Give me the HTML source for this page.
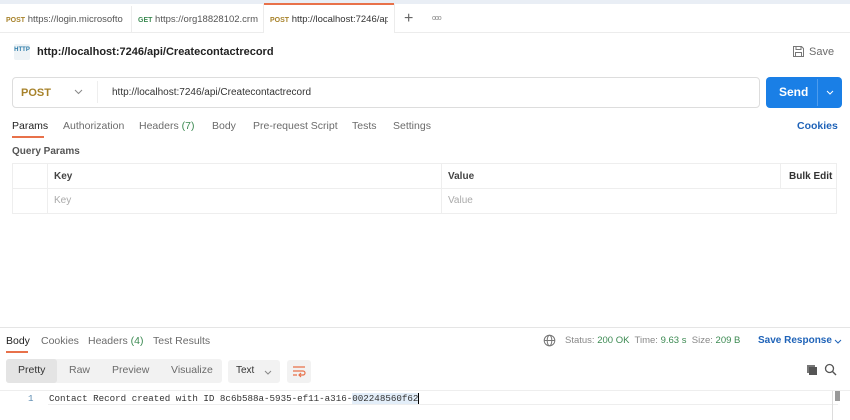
<!DOCTYPE html>
<html><head><meta charset="utf-8"><style>
*{margin:0;padding:0;box-sizing:border-box}
body{width:850px;height:420px;overflow:hidden;background:#fff;font-family:"Liberation Sans",sans-serif;font-size:11px;color:#212121;position:relative}
.a{position:absolute;white-space:nowrap}
.g{color:#6b6b6b}
.m{font-size:7px;font-weight:bold}
</style></head><body>
<div class="a" style="left:0;top:0;width:850px;height:4px;background:#e9eef5"></div>
<div class="a" style="left:0;top:4px;width:850px;height:29px;background:#fff;border-bottom:1px solid #ececec"></div>
<div class="a" style="left:131px;top:6px;width:1px;height:27px;background:#ececec"></div>
<div class="a" style="left:263px;top:4px;width:1px;height:29px;background:#ececec"></div>
<div class="a" style="left:394px;top:4px;width:1px;height:29px;background:#ececec"></div>
<div class="a" style="left:264px;top:3px;width:130px;height:31px;background:#fff;border-top:2px solid #e8714a"></div>
<div class="a" style="left:6px;top:14px;font-size:9.5px;color:#555"><span class="m" style="color:#a7822a">POST</span> https://login.microsofto</div>
<div class="a" style="left:138px;top:14px;font-size:9.5px;color:#555"><span class="m" style="color:#3c8a52">GET</span> https://org18828102.crm</div>
<div class="a" style="left:270px;top:14px;font-size:9.5px;color:#333;width:118px;overflow:hidden"><span class="m" style="color:#a7822a">POST</span> http://localhost:7246/ap</div>
<div class="a" style="left:404px;top:10px;font-size:16px;color:#666">+</div>
<div class="a" style="left:432px;top:15px;font-size:7px;color:#888;letter-spacing:-1px">ooo</div>

<div class="a" style="left:14px;top:44px;width:16px;height:16px;background:#eef3f6;border-radius:2px;font-size:6px;color:#2a7aa8;font-weight:bold;text-align:center;line-height:12px">HTTP</div>
<div class="a" style="left:37px;top:46px;font-size:11px;font-weight:bold;color:#222">http://localhost:7246/api/Createcontactrecord</div>
<svg class="a" style="left:792px;top:45px" width="13" height="13" viewBox="0 0 13 13"><path d="M1.5 1.5h8l2 2v8h-10z M4 1.5v3h5v-3 M3.5 11.5v-4h6v4" fill="none" stroke="#777" stroke-width="1"/></svg>
<div class="a g" style="left:809px;top:46px;font-size:11px">Save</div>

<div class="a" style="left:12px;top:77px;width:748px;height:31px;border:1px solid #ddd;border-radius:4px"></div>
<div class="a" style="left:97px;top:81px;width:1px;height:22px;background:#eee"></div>
<div class="a" style="left:21px;top:87px;font-weight:bold;color:#a7822a;font-size:11px">POST</div>
<svg class="a" style="left:74px;top:89px" width="9" height="6" viewBox="0 0 9 6"><path d="M1 1l3.5 3.5L8 1" fill="none" stroke="#888"/></svg>
<div class="a" style="left:112px;top:87px;font-size:10px;color:#333">http://localhost:7246/api/Createcontactrecord</div>
<div class="a" style="left:766px;top:77px;width:76px;height:31px;background:#1a7fe6;border-radius:4px"></div>
<div class="a" style="left:817px;top:79px;width:1px;height:27px;background:#4d9cee"></div>
<div class="a" style="left:779px;top:85px;color:#fff;font-weight:bold;font-size:12px">Send</div>
<svg class="a" style="left:826px;top:90px" width="8" height="5" viewBox="0 0 8 5"><path d="M1 1l3 3 3-3" fill="none" stroke="#fff"/></svg>

<div class="a" style="left:12px;top:120px;font-size:10.5px;color:#222">Params</div>
<div class="a" style="left:12px;top:136px;width:32px;height:2px;background:#e8714a"></div>
<div class="a g" style="left:63px;top:120px;font-size:10.5px">Authorization</div>
<div class="a g" style="left:139px;top:120px;font-size:10.5px">Headers <span style="color:#3c8a52">(7)</span></div>
<div class="a g" style="left:212px;top:120px;font-size:10.5px">Body</div>
<div class="a g" style="left:253px;top:120px;font-size:10.5px">Pre-request Script</div>
<div class="a g" style="left:352px;top:120px;font-size:10.5px">Tests</div>
<div class="a g" style="left:393px;top:120px;font-size:10.5px">Settings</div>
<div class="a" style="left:797px;top:120px;font-size:10.5px;color:#1f63b8;font-weight:bold">Cookies</div>

<div class="a" style="left:12px;top:146px;font-size:10px;font-weight:bold;color:#555">Query Params</div>
<div class="a" style="left:12px;top:163px;width:825px;height:51px;border:1px solid #eee"></div>
<div class="a" style="left:12px;top:188px;width:825px;height:1px;background:#eee"></div>
<div class="a" style="left:47px;top:163px;width:1px;height:51px;background:#eee"></div>
<div class="a" style="left:441px;top:163px;width:1px;height:51px;background:#eee"></div>
<div class="a" style="left:780px;top:163px;width:1px;height:25px;background:#eee"></div>
<div class="a" style="left:54px;top:171px;font-size:10px;font-weight:bold;color:#444">Key</div>
<div class="a" style="left:448px;top:171px;font-size:10px;font-weight:bold;color:#444">Value</div>
<div class="a" style="left:789px;top:171px;font-size:10px;font-weight:bold;color:#333">Bulk Edit</div>
<div class="a" style="left:54px;top:195px;font-size:10px;color:#aaa">Key</div>
<div class="a" style="left:448px;top:195px;font-size:10px;color:#aaa">Value</div>

<div class="a" style="left:0;top:327px;width:850px;height:1px;background:#e5e5e5"></div>
<div class="a" style="left:6px;top:335px;font-size:10.5px;color:#222">Body</div>
<div class="a" style="left:6px;top:351px;width:22px;height:2px;background:#e8714a"></div>
<div class="a g" style="left:41px;top:335px;font-size:10.5px">Cookies</div>
<div class="a g" style="left:88px;top:335px;font-size:10.5px">Headers <span style="color:#3c8a52">(4)</span></div>
<div class="a g" style="left:153px;top:335px;font-size:10.5px">Test Results</div>
<svg class="a" style="left:543px;top:334px" width="13" height="13" viewBox="0 0 13 13"><circle cx="6.5" cy="6.5" r="5.3" fill="none" stroke="#777"/><ellipse cx="6.5" cy="6.5" rx="2.3" ry="5.3" fill="none" stroke="#777"/><path d="M1.2 6.5h10.6" stroke="#777"/></svg>
<div class="a" style="left:565px;top:335px;font-size:9.5px;color:#888">Status: <span style="color:#3c8a52">200 OK</span>&nbsp; Time: <span style="color:#3c8a52">9.63 s</span>&nbsp; Size: <span style="color:#3c8a52">209 B</span></div>
<div class="a" style="left:758px;top:335px;font-size:10px;color:#1f63b8;font-weight:bold">Save Response</div>
<svg class="a" style="left:834px;top:339px" width="8" height="5" viewBox="0 0 8 5"><path d="M1 1l3 3 3-3" fill="none" stroke="#1f63b8"/></svg>

<div class="a" style="left:6px;top:359px;width:216px;height:24px;background:#f2f2f2;border-radius:3px"></div>
<div class="a" style="left:6px;top:359px;width:51px;height:24px;background:#e4e4e4;border-radius:3px"></div>
<div class="a" style="left:18px;top:364px;font-size:10.5px;color:#333">Pretty</div>
<div class="a g" style="left:69px;top:364px;font-size:10.5px">Raw</div>
<div class="a g" style="left:112px;top:364px;font-size:10.5px">Preview</div>
<div class="a g" style="left:171px;top:364px;font-size:10.5px">Visualize</div>
<div class="a" style="left:228px;top:360px;width:52px;height:23px;background:#f2f2f2;border-radius:3px"></div>
<div class="a" style="left:236px;top:365px;font-size:10px;color:#333">Text</div>
<svg class="a" style="left:264px;top:370px" width="8" height="5" viewBox="0 0 8 5"><path d="M1 1l3 3 3-3" fill="none" stroke="#888"/></svg>
<div class="a" style="left:287px;top:360px;width:24px;height:23px;background:#f2f2f2;border-radius:3px"></div>
<svg class="a" style="left:292px;top:365px" width="14" height="13" viewBox="0 0 14 13"><path d="M1 2h12M1 6h10a2 2 0 0 1 0 4H7M9 8l-2 2 2 2M1 10h4" fill="none" stroke="#e8714a" stroke-width="1.2"/></svg>
<svg class="a" style="left:806px;top:364px" width="12" height="12" viewBox="0 0 12 12"><rect x="1" y="1" width="8" height="8" fill="#777"/><rect x="3" y="3" width="8" height="8" fill="#555"/></svg>
<svg class="a" style="left:824px;top:363px" width="13" height="13" viewBox="0 0 13 13"><circle cx="5.5" cy="5.5" r="4" fill="none" stroke="#555" stroke-width="1.3"/><path d="M8.5 8.5l3.5 3.5" stroke="#555" stroke-width="1.4"/></svg>

<div class="a" style="left:0;top:390px;width:850px;height:1px;background:#eee"></div>
<div class="a" style="left:48px;top:404px;width:790px;height:1px;background:#eee"></div>
<div class="a" style="left:832px;top:391px;width:1px;height:29px;background:#ddd"></div>
<div class="a" style="left:835px;top:391px;width:5px;height:10px;background:#999"></div>
<div class="a" style="left:28px;top:393px;font-family:'Liberation Mono',monospace;font-size:9.2px;color:#5a8ab0">1</div>
<div class="a" style="left:49px;top:393px;font-family:'Liberation Mono',monospace;font-size:9.2px;color:#333">Contact Record created with ID 8c6b588a-5935-ef11-a316-<span style="background:#e3eef9">002248560f62</span><span style="border-left:1px solid #000"></span></div>
</body></html>
